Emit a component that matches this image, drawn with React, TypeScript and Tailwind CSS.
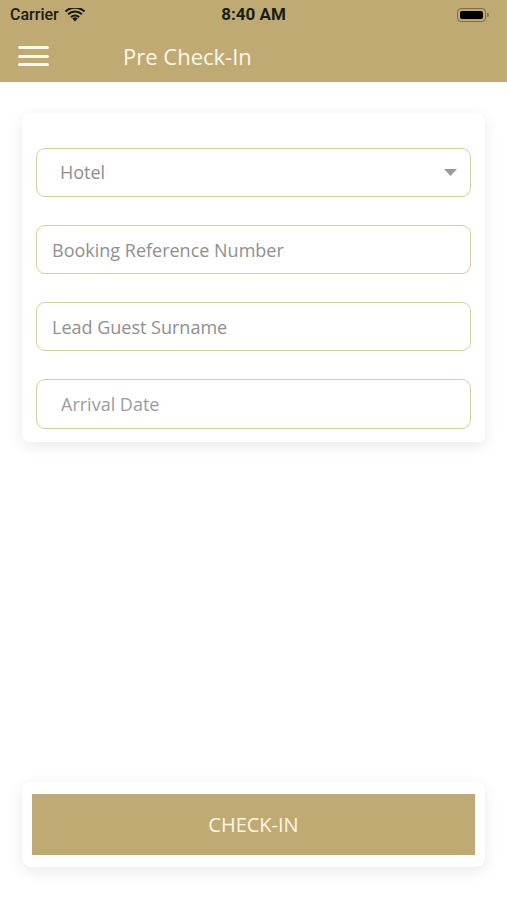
import { useState } from 'react';

type Field = {
  name: string;
  placeholder: string;
  indent: string;
};

const fields: Field[] = [
  { name: 'booking', placeholder: 'Booking Reference Number', indent: 'pl-[15px]' },
  { name: 'surname', placeholder: 'Lead Guest Surname', indent: 'pl-[15px]' },
];

function StatusBar() {
  return (
    <div
      className="relative flex h-[30px] items-center px-[10px] text-[16px] text-[#1c1a14]"
      style={{ fontFamily: 'Roboto, "Liberation Sans", sans-serif' }}
    >
      <span className="font-medium">Carrier</span>
      <svg className="ml-[6px]" width="20" height="14" viewBox="0 0 20 14" fill="#1c1a14">
        <path d="M10 13.5 7.3 10.6a3.9 3.9 0 0 1 5.4 0Z" />
        <path d="M5.2 8.4a6.9 6.9 0 0 1 9.6 0l-1.4 1.5a4.9 4.9 0 0 0-6.8 0Z" />
        <path d="M2.4 5.6a10.9 10.9 0 0 1 15.2 0l-1.4 1.5a8.9 8.9 0 0 0-12.4 0Z" />
        <path d="M-.2 2.8a14.6 14.6 0 0 1 20.4 0l-1.4 1.5a12.6 12.6 0 0 0-17.6 0Z" />
      </svg>
      <span className="absolute left-1/2 -translate-x-1/2 text-[17px] font-bold">8:40 AM</span>
      <div className="ml-auto mr-[8px] flex items-center">
        <div className="flex h-[14px] w-[29px] items-center rounded-[4px] border border-[#1c1a14]/40 p-[2px]">
          <div className="h-full w-full rounded-[2px] bg-black" />
        </div>
        <div className="ml-[1px] h-[4px] w-[2px] rounded-r-sm bg-[#1c1a14]/40" />
      </div>
    </div>
  );
}

export default function App() {
  const [hotel, setHotel] = useState('');
  const [values, setValues] = useState<{ [key: string]: string }>({});

  const handleChange = (e: React.ChangeEvent<HTMLInputElement>) => {
    const { name, value } = e.target;
    setValues((prev) => ({ ...prev, [name]: value }));
  };

  return (
    <div
      className="flex h-[900px] w-full flex-col bg-white"
      style={{ fontFamily: '"Open Sans", "Noto Sans", sans-serif' }}
    >
      <header className="bg-[#bfaa73]">
        <StatusBar />
        <div className="flex h-[52px] items-center">
          <button type="button" className="ml-[18px] flex w-[31px] flex-col gap-[5.5px]">
            <span className="h-[3px] w-full rounded-full bg-[#fff9ea]" />
            <span className="h-[3px] w-full rounded-full bg-[#fff9ea]" />
            <span className="h-[3px] w-full rounded-full bg-[#fff9ea]" />
          </button>
          <h1 className="ml-[74px] text-[22px] text-[#fcf7ea]">Pre Check-In</h1>
        </div>
      </header>

      <main className="flex flex-1 flex-col px-[22px] pb-[33px] pt-[32px]">
        <div className="flex flex-col gap-[28px] rounded-[7px] bg-white px-[14px] pb-[13px] pt-[34px] shadow-[0_4px_16px_rgba(0,0,0,0.09)]">
          <div className="relative">
            <select
              value={hotel}
              onChange={(e) => setHotel(e.target.value)}
              className="h-[49px] w-full appearance-none rounded-[9px] border-[1.5px] border-[#d9cba3] bg-white pl-[23px] text-[18px] text-[#8f8f8f] outline-none"
            >
              <option value="">Hotel</option>
            </select>
            <svg
              className="pointer-events-none absolute right-[14px] top-[21px]"
              width="13"
              height="7"
              viewBox="0 0 13 7"
              fill="#9a9a9a"
            >
              <path d="M0 0h13L6.5 7Z" />
            </svg>
          </div>

          {fields.map((field) => (
            <input
              key={field.name}
              name={field.name}
              value={values[field.name] || ''}
              onChange={handleChange}
              type="text"
              placeholder={field.placeholder}
              className={`h-[49px] w-full rounded-[9px] border-[1.5px] border-[#d9cba3] ${field.indent} text-[18px] text-[#555] outline-none placeholder:text-[#8f8f8f]`}
            />
          ))}

          <input
            name="arrival"
            value={values.arrival || ''}
            onChange={handleChange}
            type="text"
            placeholder="Arrival Date"
            className="h-[50px] w-full rounded-[9px] border-[1.5px] border-[#d9cba3] pl-[24px] text-[18px] text-[#555] outline-none placeholder:text-[#9c9c9c]"
          />
        </div>

        <div className="mt-auto rounded-[9px] bg-white px-[10px] py-[12px] shadow-[0_4px_16px_rgba(0,0,0,0.09)]">
          <button
            type="button"
            className="flex h-[61px] w-full items-center justify-center bg-[#bfaa73] text-[20px] text-[#fdf6e4]"
          >
            CHECK-IN
          </button>
        </div>
      </main>
    </div>
  );
}
